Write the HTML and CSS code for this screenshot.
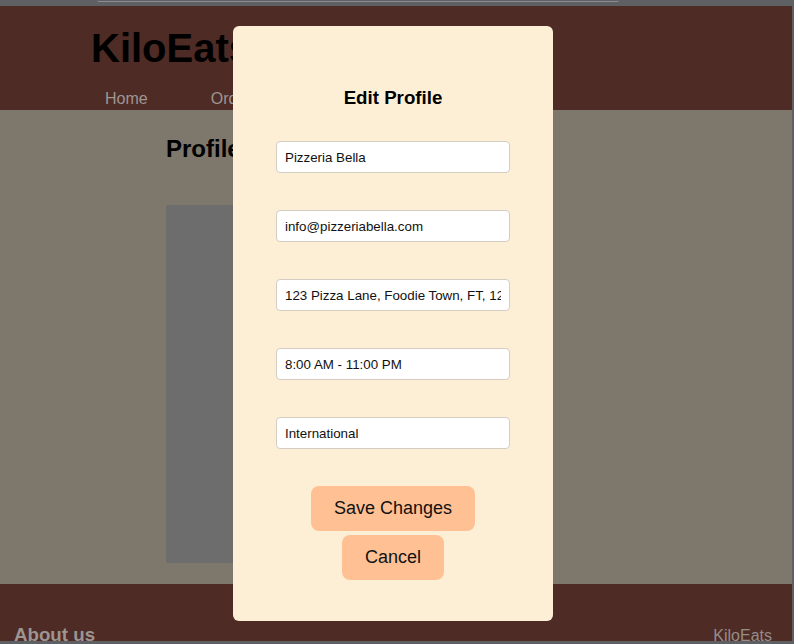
FILE: index.html
```html
<!DOCTYPE html>
<html lang="en">
<head>
<meta charset="utf-8">
<title>KiloEats - Edit Profile</title>
<link rel="stylesheet" href="styles.css">
</head>
<body>
<div class="chrome"><div class="urlbar"></div></div>
<div class="page">
  <header class="site-header">
    <h1 class="logo">KiloEats</h1>
    <nav class="nav">
      <a class="nav-link" href="#">Home</a>
      <a class="nav-link" href="#">Orders</a>
    </nav>
  </header>
  <main class="main">
    <h2 class="page-title">Profile</h2>
    <div class="profile-card"></div>
  </main>
  <footer class="site-footer">
    <h3 class="footer-title">About us</h3>
    <span class="footer-brand">KiloEats</span>
  </footer>
</div>
<div class="overlay">
  <div class="modal">
    <h2 class="modal-title">Edit Profile</h2>
    <form class="modal-form">
      <input class="field" type="text" value="Pizzeria Bella">
      <input class="field" type="email" value="info@pizzeriabella.com">
      <input class="field" type="text" value="123 Pizza Lane, Foodie Town, FT, 12345">
      <input class="field" type="text" value="8:00 AM - 11:00 PM">
      <input class="field" type="text" value="International">
      <div class="actions">
        <button class="btn" type="button">Save Changes</button>
        <button class="btn" type="button">Cancel</button>
      </div>
    </form>
  </div>
</div>
</body>
</html>
```
FILE: styles.css
```css
* { box-sizing: border-box; }
html, body { margin: 0; padding: 0; }
body {
  background: #5e6064;
  font-family: "Liberation Sans", Arial, sans-serif;
  width: 794px;
  height: 644px;
  overflow: hidden;
}
.chrome {
  height: 6px;
  background: #5e6064;
  padding-left: 97px;
}
.urlbar {
  width: 522px;
  height: 2px;
  border-bottom: 1px solid #8a8c90;
  border-radius: 0 0 6px 6px;
}
.page {
  width: 792px;
  height: 635px;
  display: flex;
  flex-direction: column;
  overflow: hidden;
}
.site-header {
  height: 104px;
  flex: none;
  background: #4e2b25;
  padding: 19px 0 0 91px;
}
.logo {
  margin: 0;
  font-size: 40px;
  line-height: 46px;
  font-weight: bold;
  color: #000;
}
.nav {
  display: flex;
  margin-top: 19px;
  padding-left: 14px;
  gap: 63px;
}
.nav-link {
  font-size: 16px;
  line-height: 18px;
  color: #9e9693;
  text-decoration: none;
}
.main {
  flex: none;
  height: 474px;
  background: #7e776b;
  padding: 25px 0 0 166px;
}
.page-title {
  margin: 0;
  font-size: 24px;
  font-weight: bold;
  color: #000;
  line-height: 28px;
}
.profile-card {
  margin-top: 42px;
  width: 360px;
  height: 358px;
  background: #6c6d6c;
  border-radius: 2px;
}
.site-footer {
  flex: none;
  height: 57px;
  background: #4e2b25;
  display: flex;
  justify-content: space-between;
  align-items: flex-start;
  padding: 40px 20px 0 14px;
}
.footer-title {
  margin: 0;
  font-size: 18.72px;
  font-weight: bold;
  line-height: 21px;
  color: #9c9592;
}
.footer-brand {
  margin-top: 3px;
  font-size: 16px;
  line-height: 18px;
  color: #948d8a;
}
.overlay {
  position: fixed;
  top: 6px;
  left: 0;
  width: 786px;
  height: 635px;
  display: flex;
  align-items: center;
  justify-content: center;
}
.modal {
  width: 320px;
  background: #fcefd6;
  border-radius: 6px;
  padding: 61px 43px 41px;
}
.modal-title {
  margin: 0;
  text-align: center;
  font-size: 18.72px;
  line-height: 21.5px;
  font-weight: bold;
  color: #000;
}
.modal-form {
  margin-top: 32.5px;
  display: flex;
  flex-direction: column;
  gap: 37px;
}
.field {
  width: 234px;
  height: 32px;
  margin: 0;
  padding: 0 8px;
  border: 1px solid #d3cdc4;
  border-radius: 4px;
  background: #fff;
  font-family: "Liberation Sans", Arial, sans-serif;
  font-size: 13.33px;
  color: #111;
}
.actions {
  display: flex;
  flex-direction: column;
  align-items: center;
  gap: 4px;
}
.btn {
  height: 45px;
  padding: 0 23px;
  border: none;
  border-radius: 8px;
  background: #ffc194;
  font-family: "Liberation Sans", Arial, sans-serif;
  font-size: 18px;
  color: #111;
}
```
